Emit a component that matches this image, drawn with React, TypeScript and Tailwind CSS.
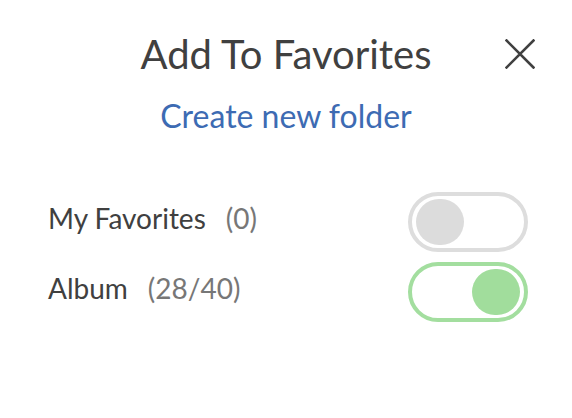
import React from "react";

function Toggle({ on }: { on: boolean }) {
  return (
    <div
      className={
        on
          ? "w-[120px] h-[60px] rounded-full border-4 border-[#a3de9f] bg-white flex items-center justify-end px-[4px]"
          : "w-[120px] h-[60px] rounded-full border-4 border-[#dddddd] bg-white flex items-center justify-start px-[4px]"
      }
    >
      <div
        className={
          on
            ? "w-[48px] h-[46px] rounded-full bg-[#a1dd9c]"
            : "w-[48px] h-[46px] rounded-full bg-[#dcdcdc]"
        }
      />
    </div>
  );
}

function Row({ label, count, on }: { label: string; count: string; on: boolean }) {
  return (
    <div className="flex items-center justify-between h-[60px]">
      <div className="flex items-baseline text-[28px] leading-[1.2] -mt-[8px]">
        <span className="text-[#404040]">{label}</span>
        <span className="text-[#777777] ml-[20px]">{count}</span>
      </div>
      <Toggle on={on} />
    </div>
  );
}

export default function App() {
  return (
    <div
      className="relative w-[572px] h-[418px] bg-white overflow-hidden"
      style={{ fontFamily: "Lato, 'Open Sans', sans-serif" }}
    >
      <div className="pt-[30px] flex flex-col items-center">
        <h1 className="text-[40px] leading-[1.2] text-[#404040] font-normal">Add To Favorites</h1>
        <a className="mt-[19px] text-[32px] leading-[1.2] text-[#3d6bb3]">Create new folder</a>
      </div>
      <button className="absolute top-[39px] right-[37px] w-[30px] h-[30px] text-[#404040]">
        <svg viewBox="0 0 30 30" width="30" height="30" fill="none" stroke="currentColor" strokeWidth="2.6" strokeLinecap="square">
          <path d="M1.5 1.5 L28.5 28.5 M28.5 1.5 L1.5 28.5" />
        </svg>
      </button>
      <div className="mt-[57px] pl-[48px] pr-[44px] flex flex-col gap-[10px]">
        <Row label="My Favorites" count="(0)" on={false} />
        <Row label="Album" count="(28/40)" on={true} />
      </div>
    </div>
  );
}
